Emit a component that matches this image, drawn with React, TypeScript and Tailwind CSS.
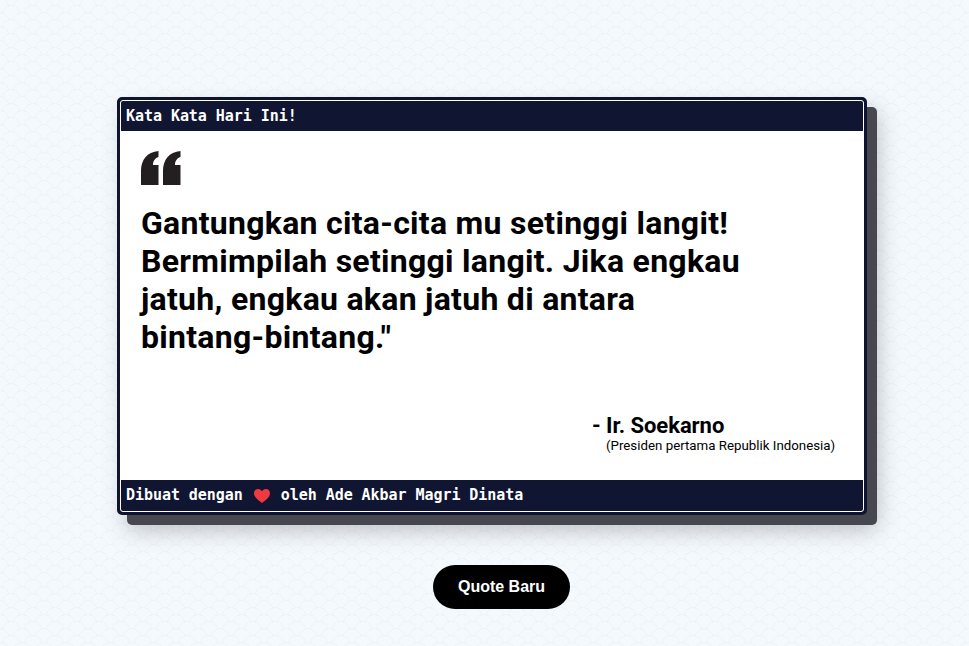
const App = () => (
  <div className="min-h-[646px] bg-[#f4f9fd] bg-[radial-gradient(circle_at_50%_100%,transparent_8px,#edf3f8_8px,#edf3f8_9px,transparent_9px),radial-gradient(circle_at_50%_100%,transparent_8px,#edf3f8_8px,#edf3f8_9px,transparent_9px)] bg-[length:22px_14px] bg-[position:0_0,11px_7px] pt-[97px] pl-[117px] overflow-hidden">
    <div className="relative w-[750px] h-[418px] rounded-[5px] bg-[#0f1430] border-[3px] border-[#0f1430] shadow-[10px_10px_0_0_#46474f,10px_14px_24px_0_rgba(0,0,0,0.25)]">
      <div className="h-full flex flex-col rounded-[3px] border border-white bg-white overflow-hidden">
        <div className="h-[30px] bg-[#101531] text-white pl-[5px] font-['DejaVu_Sans_Mono',monospace] font-bold text-[15px] tracking-[-0.05px] leading-[30px]">
          Kata Kata Hari Ini!
        </div>
        <div className="flex-1 flex flex-col pl-5 text-black font-['Roboto',sans-serif]">
          <svg className="mt-[20px]" width="40" height="34" viewBox="0 0 40 34" fill="#231f20">
            <path d="M17.500 0C6 1 0 9 0 20V34H17.500V14H12C12 10 14 7 17.500 6Z" />
            <path d="M39.500 0C28 1 22 9 22 20V34H39.500V14H34C34 10 36 7 39.500 6Z" />
          </svg>
          <p className="mt-[19px] w-[605px] text-[32px] leading-[38px] font-bold tracking-[0.28px]">
            Gantungkan cita-cita mu setinggi langit! Bermimpilah setinggi langit. Jika engkau jatuh, engkau akan jatuh di antara bintang-bintang."
          </p>
          <div className="ml-[451px] mt-[57px] text-[22px] leading-[26px] font-bold tracking-[-0.05px]">- Ir. Soekarno</div>
          <div className="ml-[465px] text-[13.3px] leading-[13px]">(Presiden pertama Republik Indonesia)</div>
        </div>
        <div className="h-[31px] bg-[#101531] text-white pl-[5px] flex items-center whitespace-pre font-['DejaVu_Sans_Mono',monospace] font-bold text-[15px] tracking-[-0.05px]">
          Dibuat dengan
          <svg className="mx-[11px]" width="16" height="14" viewBox="0 0 16 14" fill="#f03a42">
            <path d="M8 14C5 11.500 0 8.500 0 4.200C0 1.600 2 0 4.200 0C6 0 7.300 1 8 2.300C8.700 1 10 0 11.800 0C14 0 16 1.600 16 4.200C16 8.500 11 11.500 8 14Z" />
          </svg>
          oleh Ade Akbar Magri Dinata
        </div>
      </div>
    </div>
    <button className="mt-[50px] ml-[316px] block w-[137px] h-[44px] rounded-full bg-black text-white font-['Liberation_Sans',sans-serif] font-bold text-base">
      Quote Baru
    </button>
  </div>
);

export default App;
